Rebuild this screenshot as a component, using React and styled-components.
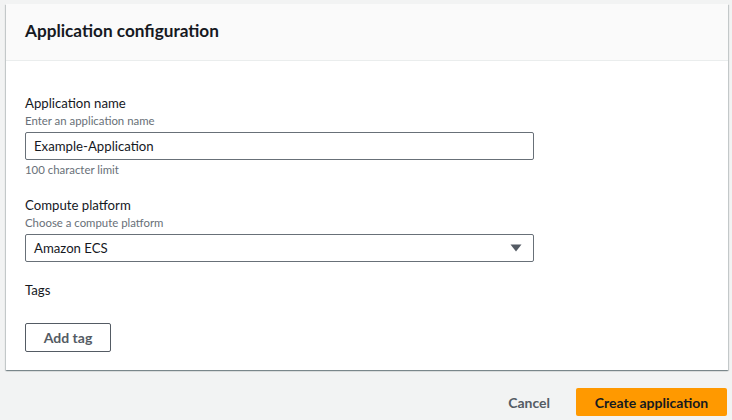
import React from "react";
import styled, { createGlobalStyle } from "styled-components";

const Global = createGlobalStyle`
  html, body { margin: 0; padding: 0; background: #f2f3f3; }
  body { font-family: Lato, "Open Sans", Arial, sans-serif; color: #16191f; }
  * { box-sizing: border-box; }
`;

const Page = styled.div`
  width: 732px;
  height: 420px;
  padding: 4px 4px 0 6px;
  display: flex;
  flex-direction: column;
`;

const Panel = styled.section`
  background: #fff;
  box-shadow: 0 1px 1px 0 rgba(0, 28, 36, 0.3), 1px 1px 1px 0 rgba(0, 28, 36, 0.15),
    -1px 1px 1px 0 rgba(0, 28, 36, 0.15);
  display: flex;
  flex-direction: column;
`;

const Header = styled.header`
  background: #fafafa;
  border-bottom: 1px solid #eaeded;
  height: 57px;
  padding: 0 19px 3px;
  display: flex;
  align-items: center;
`;

const Title = styled.h2`
  margin: 0;
  font-size: 17.2px;
  font-weight: 700;
  color: #16191f;
`;

const Body = styled.div`
  padding: 32px 19px 18px;
  display: flex;
  flex-direction: column;
  align-items: flex-start;
`;

const Field = styled.div`
  display: flex;
  flex-direction: column;
  margin-top: ${(p) => p.$gap || 0}px;
`;

const Label = styled.div`
  font-size: 13.2px;
  line-height: 20px;
  color: #16191f;
`;

const Desc = styled.div`
  font-size: 11.4px;
  line-height: 16px;
  color: #687078;
  margin-top: ${(p) => p.$mt || 0}px;
`;

const Control = styled.div`
  width: 509px;
  height: 28px;
  margin-top: 3px;
  border: 1px solid #687078;
  border-radius: 2px;
  padding: 0 8px;
  display: flex;
  align-items: center;
  justify-content: space-between;
  font-size: 13.2px;
  color: #16191f;
`;

const Caret = styled.svg`
  width: 12px;
  height: 8px;
  margin-right: 3px;
`;

const OutlineButton = styled.button`
  margin-top: 23px;
  width: 86px;
  height: 29px;
  border: 1px solid #545b64;
  border-radius: 2px;
  background: #fff;
  font-family: inherit;
  font-size: 14px;
  font-weight: 700;
  color: #545b64;
  padding: 0;
`;

const Footer = styled.div`
  margin-top: 18px;
  display: flex;
  justify-content: flex-end;
  align-items: center;
  gap: 6px;
  padding-right: 1px;
`;

const LinkButton = styled.button`
  border: none;
  background: none;
  font-family: inherit;
  font-size: 14px;
  font-weight: 700;
  color: #545b64;
  padding: 0 20px;
  height: 28px;
`;

const PrimaryButton = styled.button`
  border: none;
  border-radius: 2px;
  background: #ff9900;
  font-family: inherit;
  font-size: 14px;
  font-weight: 700;
  color: #16191f;
  width: 151px;
  height: 28px;
  padding: 0;
`;

export default function App() {
  return (
    <>
      <Global />
      <Page>
        <Panel>
          <Header>
            <Title>Application configuration</Title>
          </Header>
          <Body>
            <Field>
              <Label>Application name</Label>
              <Desc>Enter an application name</Desc>
              <Control>Example-Application</Control>
              <Desc $mt={2}>100 character limit</Desc>
            </Field>
            <Field $gap={17}>
              <Label>Compute platform</Label>
              <Desc>Choose a compute platform</Desc>
              <Control>
                Amazon ECS
                <Caret viewBox="0 0 12 8">
                  <path d="M0.5 0.5 L11.5 0.5 L6 7.5 Z" fill="#545b64" />
                </Caret>
              </Control>
            </Field>
            <Field $gap={18}>
              <Label>Tags</Label>
            </Field>
            <OutlineButton>Add tag</OutlineButton>
          </Body>
        </Panel>
        <Footer>
          <LinkButton>Cancel</LinkButton>
          <PrimaryButton>Create application</PrimaryButton>
        </Footer>
      </Page>
    </>
  );
}
